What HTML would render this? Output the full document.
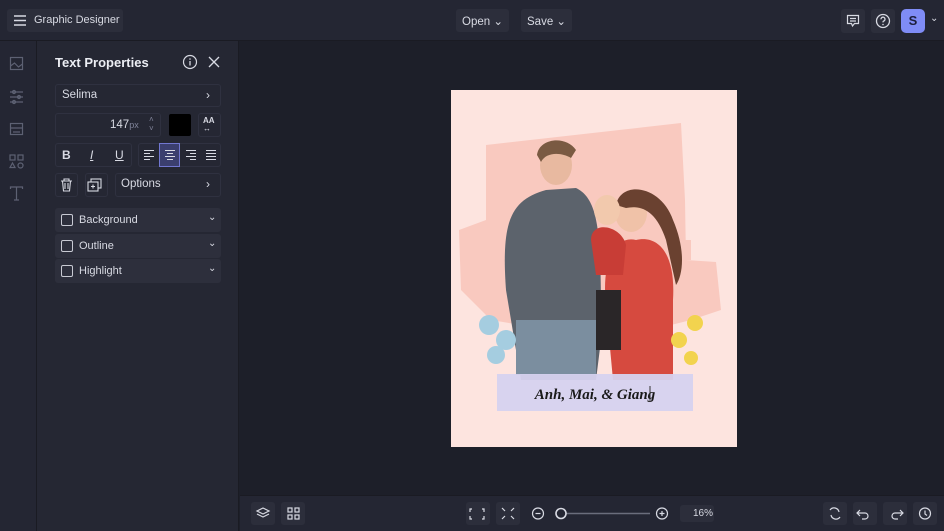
<!DOCTYPE html><html><head><style>
*{box-sizing:border-box;margin:0;padding:0}
body{width:944px;height:531px;background:#1d1f29;font-family:"Liberation Sans",sans-serif;color:#d8dae3;position:relative;overflow:hidden;font-size:12px}
.a{position:absolute}
.btn{position:absolute;background:#2c2e3b;border-radius:3px}
.pb{position:absolute;background:#252733;border:1px solid #2f3140;border-radius:3px}
svg{position:absolute}
</style></head><body>
<div class="a" style="left:0;top:0;width:944px;height:41px;background:#242633;border-bottom:1px solid #1a1b23"></div>
<div class="btn" style="left:7px;top:9px;width:116px;height:23px"></div>
<svg style="left:13px;top:14px" width="14" height="13"><path d="M1 2h12M1 6.5h12M1 11h12" stroke="#d8dae3" stroke-width="1.5"/></svg>
<div class="a" style="left:34px;top:14px;font-size:11px">Graphic Designer</div>
<div class="btn" style="left:456px;top:9px;width:53px;height:23px"></div>
<div class="a" style="left:462px;top:14px;font-size:11.5px">Open ⌄</div>
<div class="btn" style="left:521px;top:9px;width:51px;height:23px"></div>
<div class="a" style="left:527px;top:14px;font-size:11.5px">Save ⌄</div>
<div class="btn" style="left:841px;top:9px;width:24px;height:24px"></div>
<svg style="left:846px;top:14px" width="14" height="14"><path d="M1.5 1.5h11v8h-4l-2 2.5-1-2.5h-4z M4 4.5h6M4 7h6" fill="none" stroke="#d8dae3" stroke-width="1.2"/></svg>
<div class="btn" style="left:871px;top:9px;width:24px;height:24px"></div>
<svg style="left:875px;top:13px" width="16" height="16"><circle cx="8" cy="8" r="6.5" fill="none" stroke="#d8dae3" stroke-width="1.3"/><path d="M6 6.3a2 2 0 1 1 2.5 1.8c-.5.2-.5.6-.5 1.3" fill="none" stroke="#d8dae3" stroke-width="1.3"/><circle cx="8" cy="11.5" r=".8" fill="#d8dae3"/></svg>
<div class="a" style="left:901px;top:9px;width:24px;height:24px;background:#7f8cf6;border-radius:5px;color:#1b1d3a;font-weight:bold;font-size:13px;text-align:center;line-height:24px">S</div>
<div class="a" style="left:930px;top:13px;font-size:10px">⌄</div>

<div class="a" style="left:0;top:41px;width:37px;height:490px;background:#242633;border-right:1px solid #1a1b23"></div>
<svg style="left:9px;top:56px" width="16" height="160" fill="none" stroke="#5d6173" stroke-width="1.2"><rect x="1.5" y="1.5" width="12" height="12"/><path d="M1.5 10l4-3 4 4 4-3"/><path d="M1 36h13M1 41h13M1 46h13"/><circle cx="5" cy="36" r="1.5"/><circle cx="10" cy="41" r="1.5"/><circle cx="5" cy="46" r="1.5"/><rect x="1.5" y="67.5" width="12" height="11"/><path d="M1.5 72h12M4 76h7"/><rect x="1" y="99" width="5" height="5"/><rect x="9" y="99" width="5" height="5"/><path d="M3.5 107l2.5 4.5h-5z"/><circle cx="11.5" cy="109.5" r="2.5"/><path d="M1.5 133v-2h12v2M7.5 131v13M5 144h5"/></svg>

<div class="a" style="left:37px;top:41px;width:202px;height:490px;background:#252733;border-right:1px solid #1a1b23"></div>
<div class="a" style="left:55px;top:55px;font-size:13px;font-weight:bold;color:#eceef4">Text Properties</div>
<svg style="left:182px;top:54px" width="16" height="16"><circle cx="8" cy="8" r="6.5" fill="none" stroke="#d8dae3" stroke-width="1.2"/><path d="M8 7v4.5" stroke="#d8dae3" stroke-width="1.3"/><circle cx="8" cy="5" r=".8" fill="#d8dae3"/></svg>
<svg style="left:208px;top:56px" width="12" height="12"><path d="M1 1l10 10M11 1L1 11" stroke="#d8dae3" stroke-width="1.3"/></svg>
<div class="pb" style="left:55px;top:84px;width:166px;height:23px"></div>
<div class="a" style="left:62px;top:89px;font-size:11.5px">Selima</div><div class="a" style="left:206px;top:88px">›</div>
<div class="pb" style="left:55px;top:113px;width:106px;height:24px"></div>
<div class="a" style="left:110px;top:119px;font-size:11.5px">147<span style="font-size:9px;color:#80849a">px</span></div>
<div class="a" style="left:149px;top:115px;font-size:8px;color:#80849a;line-height:9px">˄<br>˅</div>
<div class="a" style="left:169px;top:114px;width:22px;height:22px;background:#000;border-radius:2px"></div>
<div class="pb" style="left:198px;top:113px;width:23px;height:24px"></div>
<div class="a" style="left:203px;top:117px;font-size:8px;font-weight:bold;line-height:8px">AA<br>↔</div>
<div class="pb" style="left:55px;top:143px;width:77px;height:24px"></div>
<div class="pb" style="left:138px;top:143px;width:83px;height:24px"></div>
<div class="a" style="left:159px;top:143px;width:21px;height:24px;background:#3b3f6e;border:1px solid #7177d0"></div>
<div class="a" style="left:62px;top:148px;font-weight:bold">B</div>
<div class="a" style="left:90px;top:148px;font-style:italic;text-decoration:underline">I</div>
<div class="a" style="left:115px;top:148px;text-decoration:underline">U</div>
<svg style="left:143px;top:149px" width="75" height="12" stroke="#d8dae3" stroke-width="1"><path d="M1 1.5h10M1 4.5h6M1 7.5h10M1 10.5h6"/><path d="M22 1.5h10M24 4.5h6M22 7.5h10M24 10.5h6"/><path d="M43 1.5h10M47 4.5h6M43 7.5h10M47 10.5h6"/><path d="M63 1.5h10M63 4.5h10M63 7.5h10M63 10.5h10"/></svg>
<div class="pb" style="left:55px;top:173px;width:23px;height:24px"></div>
<div class="pb" style="left:85px;top:173px;width:23px;height:24px"></div>
<svg style="left:60px;top:178px" width="44" height="14" fill="none" stroke="#d8dae3" stroke-width="1.1"><path d="M1 3h11M4 3V1h5v2M2.5 3l1 10h6l1-10M5 5v6M8 5v6"/><rect x="31" y="1" width="10" height="9"/><rect x="28" y="4" width="10" height="9" fill="#252733"/><path d="M33 6.5v4M31 8.5h4"/></svg>
<div class="pb" style="left:115px;top:173px;width:106px;height:24px"></div>
<div class="a" style="left:121px;top:178px;font-size:11.5px">Options</div><div class="a" style="left:206px;top:177px">›</div>
<div class="a" style="left:55px;top:208px;width:166px;height:24px;background:#2d2f3c;border-radius:3px"></div>
<div class="a" style="left:55px;top:234px;width:166px;height:24px;background:#2d2f3c;border-radius:3px"></div>
<div class="a" style="left:55px;top:259px;width:166px;height:24px;background:#2d2f3c;border-radius:3px"></div>
<div class="a" style="left:61px;top:214px;width:12px;height:12px;border:1.2px solid #c8cad3;border-radius:2px"></div>
<div class="a" style="left:61px;top:240px;width:12px;height:12px;border:1.2px solid #c8cad3;border-radius:2px"></div>
<div class="a" style="left:61px;top:265px;width:12px;height:12px;border:1.2px solid #c8cad3;border-radius:2px"></div>
<div class="a" style="left:79px;top:214px;font-size:11px">Background</div>
<div class="a" style="left:79px;top:240px;font-size:11px">Outline</div>
<div class="a" style="left:79px;top:265px;font-size:11px">Highlight</div>
<div class="a" style="left:208px;top:212px;font-size:10px">⌄</div>
<div class="a" style="left:208px;top:238px;font-size:10px">⌄</div>
<div class="a" style="left:208px;top:263px;font-size:10px">⌄</div>

<div class="a" style="left:451px;top:90px;width:286px;height:357px;background:#fde4df"></div>
<svg style="left:451px;top:90px" width="286" height="357">
<path d="M35 55L230 33 234 110 235 170 265 172 270 220 240 230 160 250 40 230 10 200 8 140 35 130z" fill="#f9c9bf"/>
<path d="M60 150 h180 v20 h-180z" fill="#f9c9bf"/>
<path d="M55 200 C50 130 60 110 95 100 L125 98 C150 110 150 150 150 250 L145 290 L70 290 Z" fill="#5c636c"/>
<path d="M65 230h80v55h-80z" fill="#7b8e9f"/>
<ellipse cx="105" cy="75" rx="16" ry="20" fill="#e8b9a0"/>
<path d="M86 65 C88 48 115 45 125 60 L120 68 C110 62 95 62 90 72z" fill="#7a5a42"/>
<path d="M155 215 C150 170 165 145 185 150 C205 145 225 160 222 210 L222 290 L162 290z" fill="#d64a3f"/>
<ellipse cx="180" cy="123" rx="16" ry="19" fill="#f0c2a8"/>
<path d="M165 115 C170 90 210 95 222 130 C235 160 232 185 225 195 L215 150 C205 120 190 115 175 118z" fill="#6a4130"/>
<path d="M140 150 C140 130 170 135 175 155 L172 185 L145 185z" fill="#c83d36"/>
<ellipse cx="156" cy="120" rx="13" ry="15" fill="#f2c9ad"/>
<path d="M145 200h25v60h-25z" fill="#2a2628"/>
<circle cx="38" cy="235" r="10" fill="#a5cde0"/><circle cx="55" cy="250" r="10" fill="#a5cde0"/><circle cx="45" cy="265" r="9" fill="#a5cde0"/>
<circle cx="244" cy="233" r="8" fill="#f2d34e"/><circle cx="228" cy="250" r="8" fill="#f2d34e"/><circle cx="240" cy="268" r="7" fill="#f2d34e"/>
<rect x="46" y="284" width="196" height="37" fill="#d6d2ef" opacity=".95"/>
<text x="144" y="309" text-anchor="middle" font-family="Liberation Serif,serif" font-style="italic" font-weight="bold" font-size="15" fill="#1a1a1a">Anh, Mai, &amp; Giang</text>
<path d="M199 296v16" stroke="#333" stroke-width="1"/>
</svg>

<div class="a" style="left:240px;top:495px;width:704px;height:36px;background:#242633;border-top:1px solid #1a1b23"></div>
<div class="btn" style="left:251px;top:502px;width:24px;height:23px"></div>
<div class="btn" style="left:281px;top:502px;width:24px;height:23px"></div>
<div class="btn" style="left:466px;top:502px;width:24px;height:23px"></div>
<div class="btn" style="left:496px;top:502px;width:24px;height:23px"></div>
<div class="btn" style="left:823px;top:502px;width:24px;height:23px"></div>
<div class="btn" style="left:853px;top:502px;width:24px;height:23px"></div>
<div class="btn" style="left:883px;top:502px;width:24px;height:23px"></div>
<div class="btn" style="left:913px;top:502px;width:24px;height:23px"></div>
<div class="btn" style="left:680px;top:505px;width:34px;height:17px"></div>
<div class="a" style="left:693px;top:508px;font-size:10px">16%</div>
<svg style="left:240px;top:495px" width="704" height="36" fill="none" stroke="#d8dae3" stroke-width="1.2">
<path d="M23 13l-6 3 6 3 6-3z M17 19l6 3 6-3"/>
<rect x="48" y="13" width="4" height="4"/><rect x="55" y="13" width="4" height="4"/><rect x="48" y="20" width="4" height="4"/><rect x="55" y="20" width="4" height="4"/>
<path d="M232 14h-2v3M242 14h2v3M232 24h-2v-3M242 24h2v-3"/>
<path d="M262 13l3 3M274 13l-3 3M262 24l3-3M274 24l-3-3"/>
<circle cx="298" cy="18.5" r="5.5"/><path d="M295.5 18.5h5"/>
<path d="M326 18.5h84" stroke="#6a6d7c" stroke-width="1.5"/>
<circle cx="321" cy="18.5" r="5" fill="#242633" stroke-width="1.6"/>
<circle cx="422" cy="18.5" r="5.5"/><path d="M419.5 18.5h5M422 16v5"/>
<path d="M590 15a5 5 0 0 1 9 2M600 22a5 5 0 0 1-9-2"/>
<path d="M620 15l-3 3 3 3M617 18h8a3 3 0 0 1 0 6h-3"/>
<path d="M660 15l3 3-3 3M663 18h-8a3 3 0 0 0 0 6h3"/>
<circle cx="685" cy="18.5" r="5.5"/><path d="M685 15.5v3.5l2 1.5"/>
</svg>
</body></html>
